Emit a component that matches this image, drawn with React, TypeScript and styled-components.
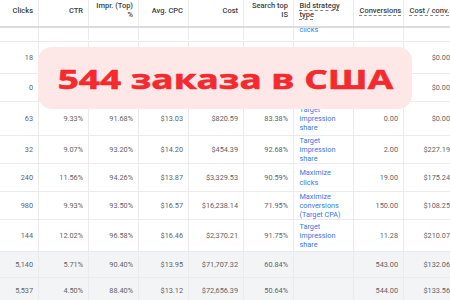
import React from 'react';
import styled, { createGlobalStyle } from 'styled-components';

const COLS = '39px 50px 50px 50px 55px 50px 60px 50px 52px';

type Row = {
  h: number;
  cells: string[];
  total?: boolean;
};

const rows: Row[] = [
  { h: 32, cells: ['18', '', '', '', '', '', '', '', '$0.00'] },
  { h: 28, cells: ['0', '', '', '', '', '', '', '', '$0.00'] },
  {
    h: 34,
    cells: ['63', '9.33%', '91.68%', '$13.03', '$820.59', '83.38%', 'Target impression share', '0.00', '$0.00'],
  },
  {
    h: 28,
    cells: ['32', '9.07%', '93.20%', '$14.20', '$454.39', '92.68%', 'Target impression share', '2.00', '$227.19'],
  },
  {
    h: 28,
    cells: ['240', '11.56%', '94.26%', '$13.87', '$3,329.53', '90.59%', 'Maximize clicks', '19.00', '$175.24'],
  },
  {
    h: 28,
    cells: ['980', '9.93%', '93.50%', '$16.57', '$16,238.14', '71.95%', 'Maximize conversions (Target CPA)', '150.00', '$108.25'],
  },
  {
    h: 32,
    cells: ['144', '12.02%', '96.58%', '$16.46', '$2,370.21', '91.75%', 'Target impression share', '11.28', '$210.07'],
  },
  {
    h: 26,
    total: true,
    cells: ['5,140', '5.71%', '90.40%', '$13.95', '$71,707.32', '60.84%', '', '543.00', '$132.06'],
  },
  {
    h: 26,
    total: true,
    cells: ['5,537', '4.50%', '88.40%', '$13.12', '$72,656.39', '50.64%', '', '544.00', '$133.56'],
  },
];

const App = () => {
  return (
    <>
      <GlobalStyle />
      <Page>
        <Header>
          <HeadCell>Clicks</HeadCell>
          <HeadCell>CTR</HeadCell>
          <HeadCell>Impr. (Top) %</HeadCell>
          <HeadCell>Avg. CPC</HeadCell>
          <HeadCell>Cost</HeadCell>
          <HeadCell>Search top IS</HeadCell>
          <HeadCell $left>
            <Dashed $wrap>Bid strategy type</Dashed>
          </HeadCell>
          <HeadCell $left>
            <Dashed>Conversions</Dashed>
          </HeadCell>
          <HeadCell $left>
            <Dashed>Cost / conv.</Dashed>
          </HeadCell>
        </Header>

        <Scrolled>
          <TableRow $h={32}>
            <Cell />
            <Cell />
            <Cell />
            <Cell />
            <Cell />
            <Cell />
            <Cell $left>
              <Link>Maximize clicks</Link>
            </Cell>
            <Cell />
            <Cell />
          </TableRow>
        </Scrolled>

        {rows.map((row, i) => (
          <TableRow key={i} $h={row.h} $total={row.total}>
            {row.cells.map((c, j) =>
              j === 6 ? (
                <Cell key={j} $left>
                  <Link>{c}</Link>
                </Cell>
              ) : (
                <Cell key={j}>{c}</Cell>
              )
            )}
          </TableRow>
        ))}

        <Banner>
          <BannerText>544 заказа в США</BannerText>
        </Banner>
      </Page>
    </>
  );
};

const GlobalStyle = createGlobalStyle`
  body {
    margin: 0;
    background: #ffffff;
    overflow: hidden;
  }
`;

const Page = styled.div`
  position: relative;
  width: 450px;
  height: 300px;
  overflow: hidden;
  font-family: Roboto, 'Liberation Sans', sans-serif;
  font-size: 7.3px;
  color: #5f6368;
`;

const Header = styled.div`
  display: grid;
  grid-template-columns: ${COLS};
  height: 26px;
  border-bottom: 2px solid #dadce0;
  position: relative;
  z-index: 1;
  background: #fff;
`;

const HeadCell = styled.div<{ $left?: boolean }>`
  display: flex;
  align-items: center;
  justify-content: ${(p) => (p.$left ? 'flex-start' : 'flex-end')};
  text-align: ${(p) => (p.$left ? 'left' : 'right')};
  padding: 1.5px 5px 7.5px 5.5px;
  border-right: 1px solid #ebebeb;
  color: #3c4043;
  font-size: 7.5px;
  font-weight: 500;
  line-height: 9px;
  overflow: hidden;
`;

const Dashed = styled.span<{ $wrap?: boolean }>`
  text-decoration: underline dashed #80868b;
  text-underline-offset: 1.5px;
  text-decoration-thickness: 1px;
  white-space: ${(p) => (p.$wrap ? 'normal' : 'nowrap')};
`;

const Scrolled = styled.div`
  height: 13px;
  overflow: hidden;
  border-bottom: 1px solid #ebebeb;
  & > div {
    margin-top: -19px;
    border-bottom: none;
  }
`;

const TableRow = styled.div<{ $h: number; $total?: boolean }>`
  display: grid;
  grid-template-columns: ${COLS};
  height: ${(p) => p.$h - 1}px;
  border-bottom: 1px solid #ebebeb;
  background: ${(p) => (p.$total ? '#f3f4f5' : '#ffffff')};
`;

const Cell = styled.div<{ $left?: boolean }>`
  display: flex;
  align-items: center;
  justify-content: ${(p) => (p.$left ? 'flex-start' : 'flex-end')};
  padding: ${(p) => (p.$left ? '0 4px 0 5.5px' : '0 5px 0 2px')};
  border-right: 1px solid #ebebeb;
  line-height: 9.2px;
  white-space: nowrap;
  overflow: hidden;
`;

const Link = styled.span`
  color: #3b78e7;
  white-space: normal;
`;

const Banner = styled.div`
  position: absolute;
  left: 38px;
  top: 47px;
  width: 374px;
  height: 62px;
  border-radius: 14px;
  background: #fde7e7;
  display: flex;
  align-items: center;
  justify-content: center;
  z-index: 2;
`;

const BannerText = styled.span`
  font-family: 'Open Sans', 'DejaVu Sans', sans-serif;
  font-weight: 700;
  font-size: 27px;
  line-height: 1;
  color: #f42a2e;
  white-space: nowrap;
  transform: scaleX(1.37);
  transform-origin: center;
  -webkit-text-stroke: 0.6px #f42a2e;
`;

export default App;
